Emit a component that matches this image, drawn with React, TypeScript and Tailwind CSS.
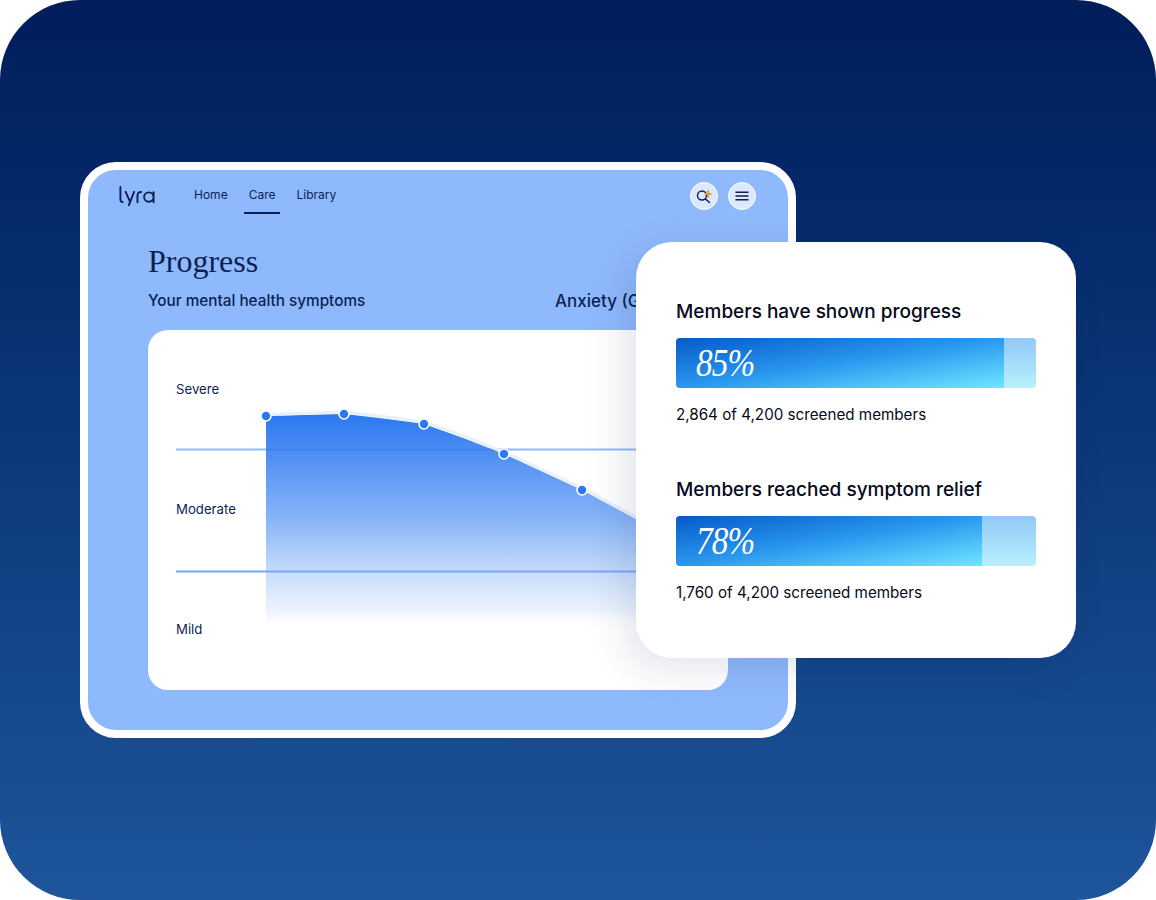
import React from 'react';

const sans = 'font-["Inter","Liberation_Sans",sans-serif]';

const navItems = ['Home', 'Care', 'Library'];

const stats = [
  { title: 'Members have shown progress', value: '85%', width: 'w-[328px]', note: '2,864 of 4,200 screened members' },
  { title: 'Members reached symptom relief', value: '78%', width: 'w-[306px]', note: '1,760 of 4,200 screened members' },
];

const points = [
  [266, 416],
  [344, 414],
  [424, 424],
  [504, 454],
  [582, 490],
];

const Logo = () => (
  <svg width="36" height="21" viewBox="0 0 38 22" fill="none" stroke="#0b1f52" strokeWidth="2" strokeLinecap="round">
    <path d="M1.5 1v13.5c0 1.5.8 2.3 2.3 2.3" />
    <path d="M7 6l4.6 10.3M16 6l-5.6 14" />
    <path d="M19.5 17V10c0-2.6 1.6-3.8 4-3.8" />
    <path d="M36.5 6.4V17M36.5 11.6a5 5 0 1 1-10 0a5 5 0 0 1 10 0z" />
  </svg>
);

const Chart = () => (
  <svg className="col-start-1 row-start-1 h-[360px] w-[580px]" viewBox="148 330 580 360" fill="none">
    <defs>
      <linearGradient id="area" x1="0" y1="414" x2="0" y2="630" gradientUnits="userSpaceOnUse">
        <stop offset="0" stopColor="#2b78ef" />
        <stop offset="0.5" stopColor="#8bb6f8" />
        <stop offset="0.75" stopColor="#cbdefb" />
        <stop offset="0.92" stopColor="#f0f5fe" />
        <stop offset="1" stopColor="#ffffff" stopOpacity="0" />
      </linearGradient>
    </defs>
    <path d="M176 449.5H728" stroke="#8fb9fd" strokeWidth="2" />
    <path d="M266 416L344 414Q390 419 424 424Q465 438 504 454L582 490L660 532V630H266Z" fill="url(#area)" />
    <path d="M266 449.5H496" stroke="#2f74ea" strokeOpacity="0.3" strokeWidth="2" />
    <path d="M176 571.5H728" stroke="#78a8f8" strokeWidth="2" />
    <path d="M266 414.5L344 412Q390 417 424 422Q465 436 504 452L582 488L660 530" stroke="#e8f0fc" strokeWidth="3" />
    {points.map(([x, y]) => (
      <circle key={x} cx={x} cy={y} r="5" fill="#2b78ef" stroke="#ffffff" strokeWidth="1.6" />
    ))}
  </svg>
);

const StatBlock = ({ title, value, width, note }: (typeof stats)[number]) => (
  <div className="flex flex-col">
    <h3 className="text-[19px] leading-[28px] font-medium text-[#050b1c]">{title}</h3>
    <div className="mt-[12px] flex h-[50px] w-[360px] overflow-hidden rounded-[4px] bg-gradient-to-b from-[#92c9f6] to-[#b9effd]">
      <div className={`${width} h-full bg-gradient-to-br from-[#0a59c9] via-[#2a98ee] to-[#6fe6ff] pl-[20px]`}>
        <span className='inline-block origin-left scale-x-[0.83] font-["Liberation_Serif",serif] text-[40px] leading-[50px] tracking-[-1px] text-white italic'>
          {value}
        </span>
      </div>
    </div>
    <p className="mt-[16px] text-[15.2px] leading-[22px] font-normal text-[#050b1c]">{note}</p>
  </div>
);

export default function App() {
  return (
    <div className={`relative h-[900px] w-[1156px] overflow-hidden bg-white ${sans}`}>
      <div className="flex h-full w-full items-start rounded-[80px] bg-gradient-to-b from-[#011d5b] to-[#1e559b] pt-[162px] pl-[80px]">
        <div className="flex h-[576px] w-[716px] flex-col rounded-[36px] border-[8px] border-white bg-[#8fb9fd] text-[#0b1f52]">
          <header className="flex h-[52px] items-center pr-[32px] pl-[31px]">
            <Logo />
            <nav className="ml-[34px] flex gap-[11px] text-[12px]">
              {navItems.map((item) => (
                <span
                  key={item}
                  className={`flex h-[36px] items-center border-b-2 px-[5px] ${
                    item === 'Care' ? 'border-[#0b1f52]' : 'border-transparent'
                  }`}
                >
                  {item}
                </span>
              ))}
            </nav>
            <div className="ml-auto flex gap-[10px]">
              <button className="flex h-[28px] w-[28px] items-center justify-center rounded-full border border-white bg-[#dbe8fd]">
                <svg width="16" height="16" viewBox="0 0 16 16" fill="none">
                  <circle cx="6" cy="7.5" r="4.5" stroke="#0b1f52" strokeWidth="1.4" />
                  <path d="M9.4 10.9L13.5 14.5" stroke="#0b1f52" strokeWidth="1.4" strokeLinecap="round" />
                  <path d="M12 2.5v7M8.5 6h7" stroke="#f8982c" strokeWidth="2.2" />
                </svg>
              </button>
              <button className="flex h-[28px] w-[28px] items-center justify-center rounded-full border border-white bg-[#dbe8fd]">
                <svg width="16" height="12" viewBox="0 0 16 12" fill="none" stroke="#0b1f52" strokeWidth="1.5">
                  <path d="M1.5 2.2h13M1.5 6h13M1.5 9.8h13" />
                </svg>
              </button>
            </div>
          </header>

          <main className="flex flex-1 flex-col pr-[60px] pl-[60px]">
            <h1 className='mt-[19px] font-["Liberation_Serif",serif] text-[32px] leading-[40px] font-normal text-[#0b1f52]'>
              Progress
            </h1>
            <div className="mt-[9px] flex items-center text-[15.3px] leading-[22px] font-medium">
              <span className="w-[407px]">Your mental health symptoms</span>
              <span className="text-[17px] whitespace-nowrap">Anxiety (GAD-7)</span>
            </div>
            <section className="mt-[18px] grid h-[360px] w-[580px] rounded-[20px] bg-white">
              <Chart />
              <div className="col-start-1 row-start-1 flex flex-col gap-[98px] pt-[48px] pl-[28px] text-[13.2px] leading-[22px]">
                <span>Severe</span>
                <span>Moderate</span>
                <span>Mild</span>
              </div>
            </section>
          </main>
        </div>
      </div>

      <aside className="absolute top-[242px] left-[636px] flex h-[416px] w-[440px] flex-col gap-[50px] rounded-[36px] bg-white pt-[56px] pl-[40px] shadow-[-10px_10px_40px_rgba(11,31,82,0.12)]">
        {stats.map((stat) => (
          <StatBlock key={stat.title} {...stat} />
        ))}
      </aside>
    </div>
  );
}
